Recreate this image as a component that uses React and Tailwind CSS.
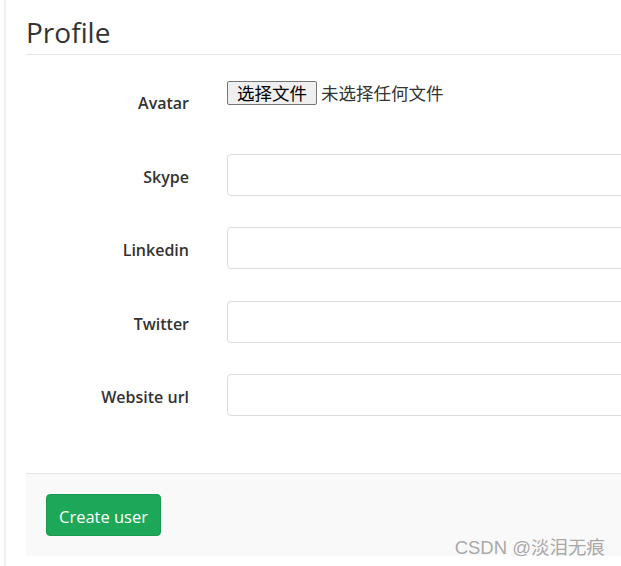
import React from "react";

const font = { fontFamily: '"Open Sans", "Noto Sans CJK SC", sans-serif' };

function Row({ label, children, center = true }) {
  return (
    <div className={`flex ${center ? "items-center" : "items-start"}`}>
      <label
        className={`w-[163px] shrink-0 text-right text-[16px] font-semibold leading-[22px] text-[#333] ${
          center ? "pt-[3px]" : "pt-[11px]"
        }`}
      >
        {label}
      </label>
      <div className="ml-[38px] flex-1">{children}</div>
    </div>
  );
}

function TextInput() {
  return (
    <input
      type="text"
      className="block h-[42px] w-full rounded-[4px] border border-[#dcdcdc] bg-white px-3 outline-none"
    />
  );
}

export default function App() {
  return (
    <div
      className="relative flex h-[566px] w-[621px] overflow-hidden bg-white"
      style={font}
    >
      <div className="ml-[4px] w-[2px] shrink-0 bg-[#efefef]" />
      <div className="ml-[20px] w-[640px] shrink-0">
        <h2 className="mt-[13px] border-b border-[#e3e3e3] pb-[3px] text-[28px] font-normal leading-[38px] text-[#333]">
          Profile
        </h2>

        <div className="mt-[26px]">
          <Row label="Avatar" center={false}>
            <div className="flex items-center" style={{ fontFamily: '"Noto Sans CJK SC", sans-serif' }}>
              <button className="h-[24px] rounded-[2px] border border-[#767676] bg-[#efefef] px-[9px] text-[17.5px] leading-[22px] text-black">
                选择文件
              </button>
              <span className="ml-[4px] text-[17.5px] leading-[22px] text-[#333]">
                未选择任何文件
              </span>
            </div>
          </Row>
        </div>

        <div className="mt-[40px]">
          <Row label="Skype">
            <TextInput />
          </Row>
        </div>
        <div className="mt-[31px]">
          <Row label="Linkedin">
            <TextInput />
          </Row>
        </div>
        <div className="mt-[32px]">
          <Row label="Twitter">
            <TextInput />
          </Row>
        </div>
        <div className="mt-[31px]">
          <Row label="Website url">
            <TextInput />
          </Row>
        </div>

        <div className="mt-[57px] border-t border-[#e5e5e5] bg-[#f9f9f9] px-[20px] pb-[20px] pt-[20px]">
          <button className="h-[42px] rounded-[4px] border border-[#189a4f] bg-[#1ca858] px-[12px] pt-[3px] text-[16.5px] leading-[22px] text-white">
            Create user
          </button>
        </div>
      </div>

      <div
        className="absolute bottom-[7px] right-[16px] text-[18.5px] leading-[22px] text-[#a8a8a8]"
        style={{ fontFamily: '"Liberation Sans", "Noto Sans CJK SC", sans-serif', textShadow: "0 0 1px #fff" }}
      >
        CSDN @淡泪无痕
      </div>
    </div>
  );
}
